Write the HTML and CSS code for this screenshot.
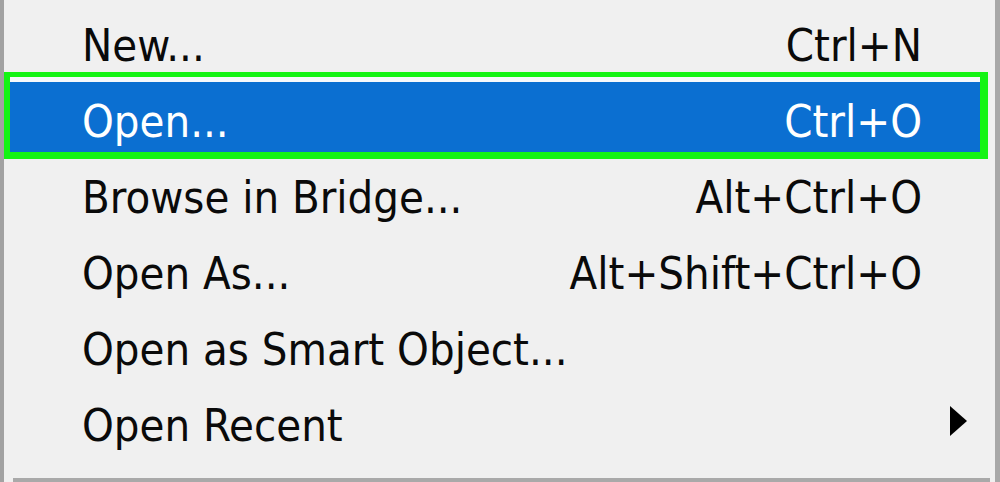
FILE: index.html
```html
<!DOCTYPE html>
<html>
<head>
<meta charset="utf-8">
<link rel="stylesheet" href="styles.css">
</head>
<body>
<div class="menu">
  <div class="row">
    <div class="item"><span class="label">New...</span><span class="key">Ctrl+N</span><span class="sub"></span></div>
  </div>
  <div class="row">
    <div class="item active"><span class="label">Open...</span><span class="key">Ctrl+O</span><span class="sub"></span></div>
  </div>
  <div class="row">
    <div class="item"><span class="label">Browse in Bridge...</span><span class="key">Alt+Ctrl+O</span><span class="sub"></span></div>
  </div>
  <div class="row">
    <div class="item"><span class="label">Open As...</span><span class="key">Alt+Shift+Ctrl+O</span><span class="sub"></span></div>
  </div>
  <div class="row">
    <div class="item"><span class="label">Open as Smart Object...</span><span class="key"></span><span class="sub"></span></div>
  </div>
  <div class="row">
    <div class="item"><span class="label">Open Recent</span><span class="key"></span><span class="sub"><svg width="18" height="30" viewBox="0 0 18 30"><polygon points="0,0 17,15 0,30" fill="#000"/></svg></span></div>
  </div>
  <div class="separator"></div>
</div>
</body>
</html>
```

FILE: styles.css
```css
html, body {
  margin: 0;
  padding: 0;
  background: #f0f0f0;
  overflow: hidden;
}

.menu {
  width: 1000px;
  height: 482px;
  box-sizing: border-box;
  background: #f0f0f0;
  border-left: 4px solid #a2a2a2;
  border-right: 5px solid #a8a8a8;
  padding-top: 2px;
  font-family: "DejaVu Sans Condensed", "DejaVu Sans", sans-serif;
  font-size: 45px;
  color: #0a0a0a;
  display: flex;
  flex-direction: column;
}

.row {
  height: 76px;
  padding: 4px 15px 2px 6px;
  box-sizing: border-box;
}

.item {
  position: relative;
  height: 70px;
  box-sizing: border-box;
  padding-top: 5px;
  padding-left: 72px;
  line-height: 70px;
  display: flex;
  white-space: nowrap;
}

.label {
  flex: 1;
}

.key {
  text-align: right;
}

.sub {
  width: 58px;
  box-sizing: border-box;
  padding-left: 28px;
  display: flex;
  align-items: center;
  height: 70px;
  margin-top: -5px;
}

.item.active {
  background: #0b6fd1;
  color: #ffffff;
}

.item.active::after {
  content: "";
  position: absolute;
  left: -6px;
  top: -10px;
  right: -8px;
  bottom: -7px;
  border-style: solid;
  border-color: #14f414;
  border-width: 5px 8px 7px 6px;
}

.item.active::before {
  content: "";
  position: absolute;
  left: 0;
  right: 0;
  top: -5px;
  height: 5px;
  background: #f6f8fb;
}

.separator {
  margin: 20px 5px 0 9px;
  height: 4px;
  background: #a9a9a9;
}
```
